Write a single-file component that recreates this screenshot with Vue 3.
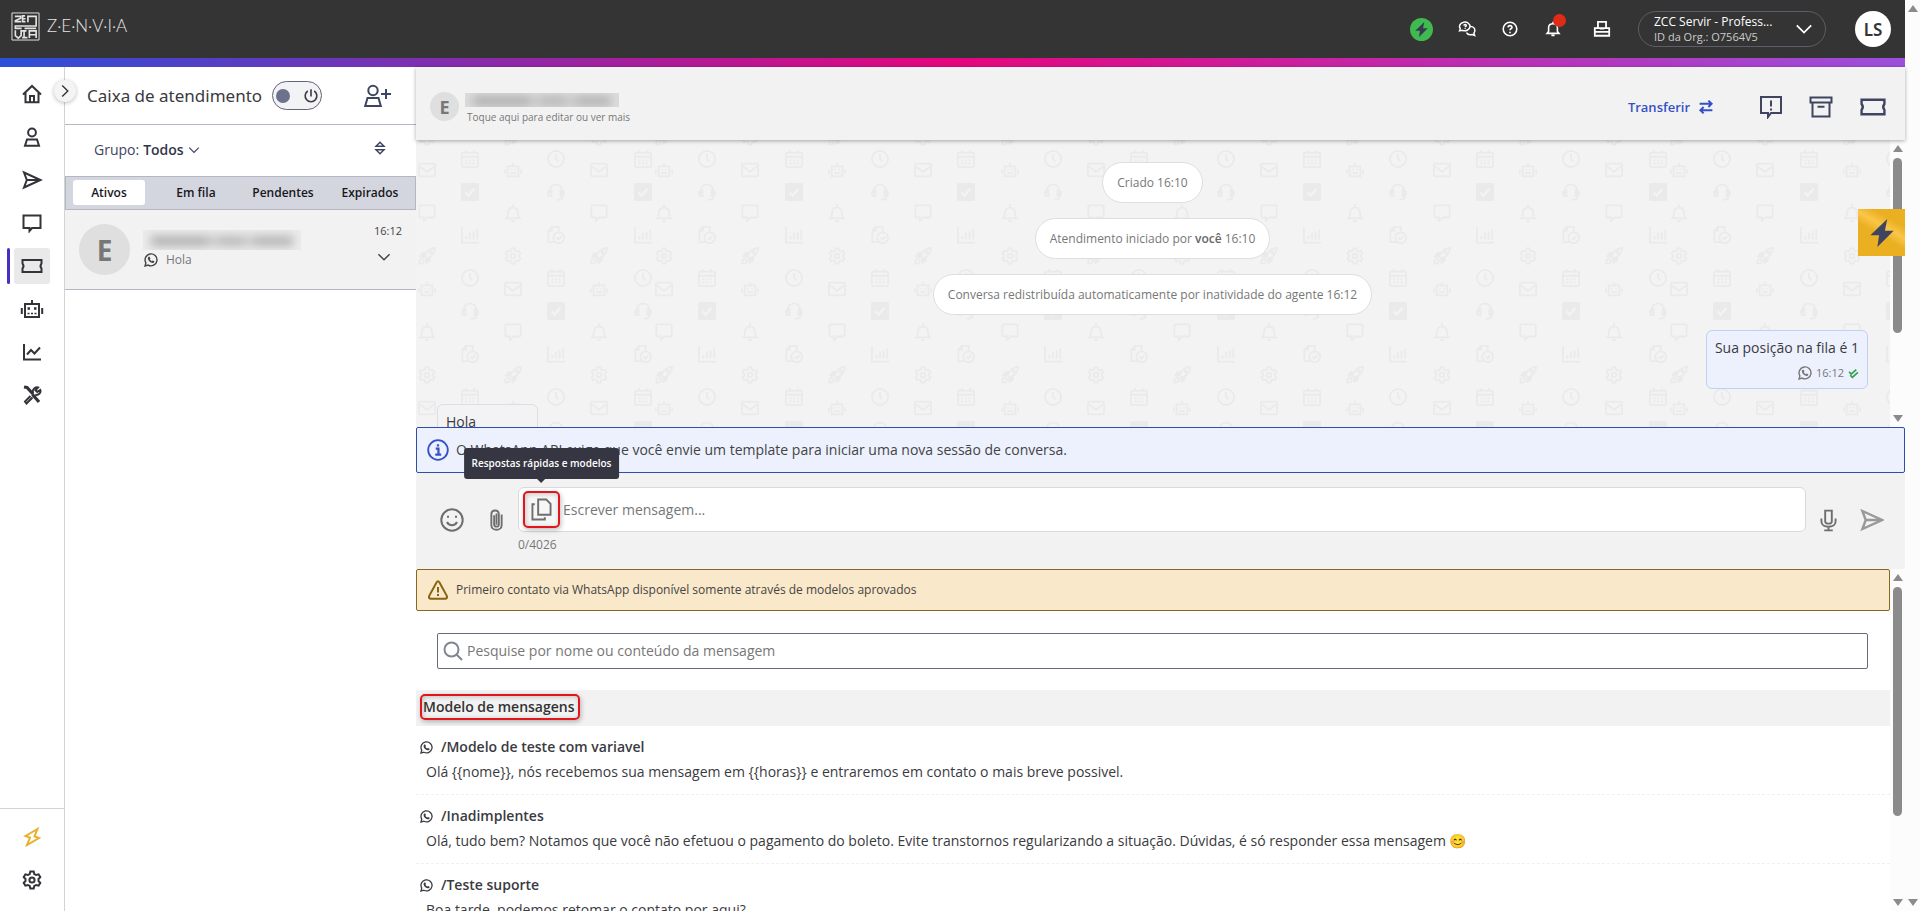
<script setup>
import { ref } from 'vue'

const navItems = [
  { id: 'home', label: 'Início' },
  { id: 'user', label: 'Contatos' },
  { id: 'send', label: 'Campanhas' },
  { id: 'chat', label: 'Conversas' },
  { id: 'ticket', label: 'Atendimento', active: true },
  { id: 'robot', label: 'Bots' },
  { id: 'chart', label: 'Relatórios' },
  { id: 'tools', label: 'Ferramentas' },
]

const tabs = ['Ativos', 'Em fila', 'Pendentes', 'Expirados']
const activeTab = ref('Ativos')
const message = ref('')
const query = ref('')

const templates = [
  {
    name: '/Modelo de teste com variavel',
    text: 'Olá {{nome}}, nós recebemos sua mensagem em {{horas}} e entraremos em contato o mais breve possivel.',
  },
  {
    name: '/Inadimplentes',
    text: 'Olá, tudo bem? Notamos que você não efetuou o pagamento do boleto. Evite transtornos regularizando a situação. Dúvidas, é só responder essa mensagem 😊',
  },
  {
    name: '/Teste suporte',
    text: 'Boa tarde, podemos retomar o contato por aqui?',
  },
]

// Wallpaper: one tile holds 24 columns, four column kinds repeat inside it.
const columnKinds = [
  [['w-rocket', -3], ['w-robot', 30], ['w-bell', 73], ['w-gear', 116], ['w-mail', 149], ['w-chat', 192], ['w-rocket', 235], ['w-robot', 268]],
  [['w-clock', 19], ['w-headset', 52], ['w-file', 95], ['w-calendar', 138], ['w-check', 171], ['w-bars', 214], ['w-clock', 257], ['w-headset', 290]],
  [['w-gear', -3], ['w-mail', 30], ['w-chat', 73], ['w-rocket', 116], ['w-robot', 149], ['w-bell', 192], ['w-gear', 235], ['w-mail', 268]],
  [['w-calendar', 19], ['w-check', 52], ['w-bars', 95], ['w-clock', 138], ['w-headset', 171], ['w-file', 214], ['w-calendar', 257], ['w-check', 290]],
]
const wallpaper = []
for (let tile = -1; tile < 3; tile++) {
  for (let i = 0; i < 24; i++) {
    const x = Math.round(248 + tile * 1015 + i * 43.2)
    if (x < -20) continue
    for (const [id, y] of columnKinds[i % 4]) wallpaper.push({ id, x: x - 9, y: y - 9 })
  }
}
</script>

<template>
  <svg class="sprite" aria-hidden="true">
    <symbol id="home" viewBox="0 0 20 20"><path d="M1 10.500 10 2l9 8.500M3.500 9v9.200h13V9M8 18v-6h4v6" /></symbol>
    <symbol id="user" viewBox="0 0 20 20"><circle cx="10" cy="5.500" r="3.900" /><path d="M5 12.500h10l2 6.200H3z" /></symbol>
    <symbol id="send" viewBox="0 0 20 20"><path d="M2 2.500 18.500 10 2 17.500 4.800 10zM4.800 10H18" /></symbol>
    <symbol id="chat" viewBox="0 0 20 20"><path d="M1.500 2.500h17v12.500H10l-2.500 3v-3h-6z" /></symbol>
    <symbol id="ticket" viewBox="0 0 22 20"><path d="M1.500 4h19v3.500q-2 2.500 0 5V16h-19v-3.500q2-2.500 0-5z" /></symbol>
    <symbol id="robot" viewBox="0 0 24 20"><path d="M5 5h14v13H5zM12 5V1M1.800 9v6M22.200 9v6" /><path d="M7.500 9.500h2.500M14 9.500h2.500" stroke-width="2.500" /><path d="M7.500 14.500h9" stroke-dasharray="2 1.500" stroke-width="1.400" /></symbol>
    <symbol id="chart" viewBox="0 0 20 20"><path d="M2 2v15.500h17M5 12.500l4-4.500 3.500 3.500 5.500-6" /></symbol>
    <symbol id="tools" viewBox="0 0 20 20"><path d="M2 2l3 .5L11 9M10.500 9.500l6.500 7.500" stroke-width="3.200" /><path d="M8.500 11 3 16.500l1.500 2L10.500 12.500M11 8c-1-3.500 2-6.500 5-5.500l-2.500 2.700 1.700 1.700L18.300 5c1 3-2 5.500-5 4.800" /></symbol>
    <symbol id="bolt" viewBox="0 0 20 20"><path d="M15.500 2 3.500 9l4.500 1.500L5 18l12-7-4.500-1.500z" /></symbol>
    <symbol id="bolt-solid" viewBox="0 0 20 24"><path d="M14.500 0 0 14h7.500L6 24 20 10h-7.500z" fill="currentColor" stroke="none" /></symbol>
    <symbol id="gear" viewBox="0 0 20 20"><path d="M8.300 1.500h3.400l.6 2.500 1.800 1 2.500-.7 1.700 2.900L16.500 9v2l1.800 1.800-1.700 2.900-2.500-.7-1.800 1-.6 2.500H8.300L7.700 16l-1.800-1-2.500.7-1.700-2.900L3.500 11V9L1.700 7.200l1.700-2.900 2.500.7 1.800-1z" /><circle cx="10" cy="10" r="2.600" /></symbol>
    <symbol id="chevron" viewBox="0 0 20 20"><path d="m2 6 8 8 8-8" /></symbol>
    <symbol id="power" viewBox="0 0 20 20"><path d="M10 1.500v9M6 3.800a7.300 7.300 0 1 0 8 0" /></symbol>
    <symbol id="user-add" viewBox="0 0 28 24"><circle cx="10" cy="6.500" r="4.700" /><path d="M4.500 14h11l2.300 8H2.200zM23 5v10M18 10h10" /></symbol>
    <symbol id="sort" viewBox="0 0 12 14"><path d="M2 5.200 6 1.200l4 4zM2 8.800l4 4 4-4z" stroke-width="1.500" /></symbol>
    <symbol id="whatsapp" viewBox="0 0 20 20"><path d="m1.500 18.500 1.200-4.400a8.500 8.500 0 1 1 3.300 3.200z" /><path d="M6.500 5.500 8 5.200l1.200 2.600-.9 1.200c.6 1.200 1.400 2 2.800 2.700l1.200-1.100 2.500 1.200c0 1.800-1.500 2.700-3 2.500-3.400-.6-6-3.400-6.300-6.300 0-1 .3-1.800 1-2.500z" fill="currentColor" stroke="none" /></symbol>
    <symbol id="talk" viewBox="0 0 24 22"><path d="M2 13.500 3 10.500a7 5.800 0 1 1 3 2.300zM16.500 7.500c4 .3 6 2.800 6 5.500 0 1.500-.5 2.500-1.300 3.500l1 3-3.200-1.200c-3.500 1-6.500-.3-7.700-2.500M7.800 6.500c.2-2 3.500-1.700 3.200 0-.1.900-1.500 1-1.500 2M9.500 10v1" /></symbol>
    <symbol id="help" viewBox="0 0 20 20"><circle cx="10" cy="10" r="8.500" /><path d="M7.500 8c.2-3.200 5.200-2.800 5 0-.1 1.700-2.500 1.700-2.500 3.700M10 13.500v1.800" /></symbol>
    <symbol id="bell" viewBox="0 0 20 20"><path d="M2.500 15.500h15L15.500 13V8.500c0-3-2-5-5.500-5s-5.500 2-5.500 5V13zM10 1v2.500M8 18h4" /></symbol>
    <symbol id="printer" viewBox="0 0 20 20"><path d="M5.500 9V2h9v7M2 17.500V9h16v8.500zM2 13.200h16M7.500 9.500h5" /></symbol>
    <symbol id="transfer" viewBox="0 0 20 20"><path d="M2 6h15M13 2l4 4-4 4M18 14H3M7 10l-4 4 4 4" stroke-width="2.500" /></symbol>
    <symbol id="alert-chat" viewBox="0 0 24 24"><path d="M2 2h20v16H12l-3 4v-4H2zM12 5.500v6M12 13.500v2" /></symbol>
    <symbol id="archive" viewBox="0 0 24 24"><path d="M1.500 2.500h21v5h-21zM3.500 7.500h17v14h-17zM8.500 11.800h7" /></symbol>
    <symbol id="checks" viewBox="0 0 20 20"><path d="m2 7 4 4 9-8M4 13l4 4L18 8" stroke-width="3" /></symbol>
    <symbol id="info" viewBox="0 0 24 24"><circle cx="12" cy="12" r="10.700" /><path d="M9.500 10.500h3V17M9 17h6.500M12 5.800v2.500" stroke-width="2.400" /></symbol>
    <symbol id="smile" viewBox="0 0 24 24"><circle cx="12" cy="12" r="10.700" /><path d="M7 14c2 4.300 8 4.300 10 0M8 7.800v2M16 7.800v2" /></symbol>
    <symbol id="clip" viewBox="0 0 16 24"><path d="M13.500 6v11.500c0 6.500-11 6.500-11 0V6c0-5.500 8-5.500 8 0v10.500c0 3.500-5 3.500-5 0V7M8 5v12" /></symbol>
    <symbol id="copy" viewBox="0 0 22 24"><path d="M7.500 1.500h8.500l4.500 4.500v11.500h-13zM4 6.500H1.500v16h13V20" /></symbol>
    <symbol id="mic" viewBox="0 0 18 24"><path d="M5.500 1.500h7V13c0 3-7 3-7 0zM1.500 10v3c0 7.500 15 7.500 15 0v-3M9 18.500v4M4.500 22.500h9" /></symbol>
    <symbol id="warning" viewBox="0 0 22 22"><path d="M9.500 3.500q1.500-2.300 3 0l7.300 13.300q1 2.700-1.800 2.900H4q-2.800-.2-1.800-2.900z" /><path d="M11 8v5.500M11 15v2" /></symbol>
    <symbol id="search" viewBox="0 0 20 20"><circle cx="8.500" cy="8.500" r="7" /><path d="m13.500 13.500 5.500 5.500" /></symbol>
    <symbol id="mark" viewBox="0 0 30 30"><path d="M1 1h28v28H1z" stroke-width="1" /><path d="M4 4.500h6v2L4.500 9v1h6M14.500 4h-2.500v6h3M12 7h3M17.500 10.500V4.500h8.500v10H4.500v2.500H11M4.500 19v5.500L7.500 27l3-2.500v-5h5.500M13.500 20v6M11.500 26.500h5.500M19 27v-7.500h7V27M19 23.500h7M14 17h12" stroke-width="1.700" /></symbol>
    <symbol id="w-rocket" viewBox="0 0 20 20"><path d="M7 10.500C9 5 13 1.500 19 1c-.5 6-4 10-9.500 12z" /><path d="M8 6.500H4.500L1.500 11l5 .5zM13.500 12v3.500L9 18.500l-.5-5z" fill="currentColor" stroke-width="1" /><circle cx="14" cy="6" r="1" /><path d="M1.500 18.500q-.5-5 2.500-5t2.500 2.500q-.5 3-5 2.500z" /></symbol>
    <symbol id="w-robot" viewBox="0 0 20 20"><path d="M4 6h12v11H4zM10 6V2M1 9.500V14M19 9.500V14M7 13.500h6M7 9.500h1.500M11.500 9.500H13" /></symbol>
    <symbol id="w-chat" viewBox="0 0 20 20"><path d="M2.500 1.500h15q1 0 1 1v11.500q0 1-1 1h-7L6.500 19v-4h-4q-1 0-1-1V2.500q0-1 1-1z" /></symbol>
    <symbol id="w-bell" viewBox="0 0 20 20"><path d="M2.500 16h15q-2-2-2-6c0-4-2-6-5.500-6s-5.500 2-5.500 6q0 4-2 6zM10 0v4M8 19h4" /></symbol>
    <symbol id="w-gear" viewBox="0 0 20 20"><path d="M8.300 1.500h3.400l.6 2.500 1.800 1 2.500-.7 1.700 2.900L16.500 9v2l1.800 1.800-1.700 2.900-2.500-.7-1.800 1-.6 2.500H8.300L7.700 16l-1.800-1-2.500.7-1.700-2.900L3.500 11V9L1.700 7.200l1.700-2.900 2.500.7 1.800-1z" /><circle cx="10" cy="10" r="2.600" /></symbol>
    <symbol id="w-mail" viewBox="0 0 20 20"><rect x="1" y="3" width="18" height="14" rx="1.500" /><path d="m2 6 8 6 8-6" /></symbol>
    <symbol id="w-clock" viewBox="0 0 20 20"><circle cx="10" cy="10" r="9" /><path d="M10 4.500V10l2.500 2.500" /></symbol>
    <symbol id="w-headset" viewBox="0 0 20 20"><path d="M3 12V9c0-9.500 14-9.500 14 0v7c0 2-2 2.500-6 2.500M3 8C.5 9 .5 13.500 3 14.500h2V8zM17 8c2.500 1 2.500 5.500 0 6.500h-2V8z" /></symbol>
    <symbol id="w-file" viewBox="0 0 20 20"><path d="M9 18H1.500V5l4-4H13v5M5.500 1v4h-4" /><circle cx="13" cy="13" r="6" /><path d="m10.500 13 2 2 3.500-3.500" /></symbol>
    <symbol id="w-calendar" viewBox="0 0 20 20"><rect x="1" y="3" width="18" height="16" rx="1.500" /><path d="M1 7.500h18M5.500 0v4M14.500 0v4" /><path d="M5 11.500h11M5 15h11" stroke-dasharray="2 2" /></symbol>
    <symbol id="w-check" viewBox="0 0 20 20"><rect x="0" y="0" width="20" height="20" rx="2" fill="currentColor" stroke="none" /><path d="m5 10.500 3.500 3.500L15 6.500" stroke="#f3f3f3" stroke-width="2.500" /></symbol>
    <symbol id="w-bars" viewBox="0 0 20 20"><path d="M1 1v17.500h19M6 15v-4M10 15V7.500M14 15V6M18 15V4" /></symbol>
  </svg>

  <div class="window">
    <div class="app">
      <header class="topbar">
        <a class="brand" href="#" aria-label="Zenvia">
          <svg class="brand-mark"><use href="#mark" /></svg>
          <span>Z·E·N·V·I·A</span>
        </a>
        <div class="top-actions">
          <button class="boost" aria-label="Destaques"><svg><use href="#bolt-solid" /></svg></button>
          <button aria-label="Comunidade"><svg class="i18"><use href="#talk" /></svg></button>
          <button aria-label="Ajuda"><svg class="i16"><use href="#help" /></svg></button>
          <button class="bell" aria-label="Notificações"><svg class="i16"><use href="#bell" /></svg><i></i></button>
          <button class="news" aria-label="Novidades"><svg class="i18"><use href="#printer" /></svg></button>
        </div>
        <button class="org">
          <span class="org-text"><span>ZCC Servir - Profess...</span><small>ID da Org.: O7564V5</small></span>
          <svg class="i18"><use href="#chevron" /></svg>
        </button>
        <button class="me">LS</button>
      </header>
      <div class="rainbow"></div>

      <div class="body">
        <nav class="rail">
          <a v-for="item in navItems" :key="item.id" href="#" :aria-label="item.label" :class="{ active: item.active }">
            <svg><use :href="'#' + item.id" /></svg>
          </a>
          <div class="rail-bottom">
            <a href="#" class="gold" aria-label="Planos"><svg><use href="#bolt" /></svg></a>
            <a href="#" aria-label="Configurações"><svg><use href="#gear" /></svg></a>
          </div>
          <button class="expand" aria-label="Expandir menu"><svg><use href="#chevron" /></svg></button>
        </nav>

        <aside class="inbox">
          <div class="inbox-head">
            <h1>Caixa de atendimento</h1>
            <button class="toggle" aria-label="Disponibilidade"><i></i><svg class="i16"><use href="#power" /></svg></button>
            <button class="add" aria-label="Novo atendimento"><svg><use href="#user-add" /></svg></button>
          </div>
          <div class="group-row">
            <button class="group">Grupo: <b>Todos</b><svg><use href="#chevron" /></svg></button>
            <button class="sort" aria-label="Ordenar"><svg><use href="#sort" /></svg></button>
          </div>
          <div class="tabs">
            <button v-for="tab in tabs" :key="tab" :class="{ on: tab === activeTab }" @click="activeTab = tab">{{ tab }}</button>
          </div>
          <article class="card">
            <span class="avatar">E</span>
            <div class="card-main">
              <div class="hidden-name"><i></i></div>
              <p><svg><use href="#whatsapp" /></svg>Hola</p>
            </div>
            <div class="card-side">
              <time>16:12</time>
              <svg><use href="#chevron" /></svg>
            </div>
          </article>
        </aside>

        <main class="chat">
          <header class="chat-head">
            <span class="avatar small">E</span>
            <div class="contact">
              <div class="hidden-name"><i></i></div>
              <a href="#">Toque aqui para editar ou ver mais</a>
            </div>
            <button class="transfer">Transferir <svg><use href="#transfer" /></svg></button>
            <button aria-label="Observação"><svg class="i24"><use href="#alert-chat" /></svg></button>
            <button aria-label="Arquivar"><svg class="i24"><use href="#archive" /></svg></button>
            <button aria-label="Ticket"><svg class="i28"><use href="#ticket" /></svg></button>
          </header>

          <div class="scroll-row messages-row">
            <section class="messages">
              <svg class="wallpaper" aria-hidden="true">
                <use v-for="(w, n) in wallpaper" :key="n" :href="'#' + w.id" :x="w.x" :y="w.y" width="18" height="18" />
              </svg>
              <p class="event">Criado 16:10</p>
              <p class="event">Atendimento iniciado por <b>você</b> 16:10</p>
              <p class="event">Conversa redistribuída automaticamente por inatividade do agente 16:12</p>
              <div class="bubble out">
                <p>Sua posição na fila é 1</p>
                <small><svg class="i14"><use href="#whatsapp" /></svg><span>16:12</span><svg class="checks"><use href="#checks" /></svg></small>
              </div>
              <div class="bubble in"><p>Hola</p></div>
            </section>
            <div class="bar"><i class="up"></i><i class="thumb"></i><i class="down"></i></div>
          </div>

          <div class="notice info">
            <svg><use href="#info" /></svg>
            <span>O WhatsApp API exige que você envie um template para iniciar uma nova sessão de conversa.</span>
          </div>

          <form class="composer" @submit.prevent>
            <button type="button" aria-label="Emoji"><svg class="i24"><use href="#smile" /></svg></button>
            <button type="button" aria-label="Anexar"><svg class="clip"><use href="#clip" /></svg></button>
            <div class="field">
              <div class="input-box">
                <button type="button" class="quick" aria-label="Respostas rápidas e modelos">
                  <svg><use href="#copy" /></svg>
                  <span class="tooltip" role="tooltip">Respostas rápidas e modelos</span>
                </button>
                <input v-model="message" aria-label="Mensagem" placeholder="Escrever mensagem..." />
              </div>
              <small>{{ message.length }}/4026</small>
            </div>
            <button type="button" aria-label="Gravar áudio"><svg class="mic"><use href="#mic" /></svg></button>
            <button type="submit" class="submit" aria-label="Enviar"><svg class="i24"><use href="#send" /></svg></button>
          </form>

          <div class="scroll-row templates-row">
            <section class="templates">
              <div class="notice warn">
                <svg><use href="#warning" /></svg>
                <span>Primeiro contato via WhatsApp disponível somente através de modelos aprovados</span>
              </div>
              <div class="search">
                <svg><use href="#search" /></svg>
                <input v-model="query" aria-label="Pesquisar" placeholder="Pesquise por nome ou conteúdo da mensagem" />
              </div>
              <h2><span>Modelo de mensagens</span></h2>
              <ul>
                <li v-for="item in templates" :key="item.name">
                  <h3><svg><use href="#whatsapp" /></svg>{{ item.name }}</h3>
                  <p>{{ item.text }}</p>
                </li>
              </ul>
            </section>
            <div class="bar"><i class="up"></i><i class="thumb"></i><i class="down"></i></div>
          </div>

          <button class="flag" aria-label="Dicas"><svg><use href="#bolt-solid" /></svg></button>
        </main>
      </div>
    </div>
    <div class="bar page-bar"><i class="up"></i><i class="down"></i></div>
  </div>
</template>

<style>
body {
  margin: 0;
  overflow: hidden;
}
</style>

<style scoped>
* {
  box-sizing: border-box;
}
.sprite {
  position: absolute;
  width: 0;
  height: 0;
}
svg {
  display: block;
  flex: none;
  fill: none;
  stroke: currentColor;
  stroke-width: 2;
}
h1, h2, h3, p, ul {
  margin: 0;
  padding: 0;
  font-weight: 400;
}
b {
  font-weight: 600;
}
button {
  display: flex;
  align-items: center;
  justify-content: center;
  padding: 0;
  border: 0;
  background: none;
  color: inherit;
  font: inherit;
  cursor: pointer;
}
a {
  color: inherit;
  text-decoration: none;
}
input {
  flex: 1;
  min-width: 0;
  padding: 0;
  border: 0;
  outline: 0;
  background: none;
  font: inherit;
}
.i14 { width: 14px; height: 14px; }
.i16 { width: 16px; height: 16px; }
.i18 { width: 18px; height: 18px; }
.i24 { width: 24px; height: 24px; }
.i28 { width: 28px; height: 24px; }

.window {
  display: flex;
  height: 100vh;
  background: #fff;
  color: #3a3a40;
  font: 14px/20px "Open Sans", "Noto Sans", sans-serif;
}
.app {
  display: flex;
  flex: 1;
  flex-direction: column;
  min-width: 0;
}

/* top bar */
.topbar {
  display: flex;
  align-items: center;
  flex: none;
  height: 58px;
  padding: 0 14px 0 11px;
  background: #343434;
  color: #fff;
}
.brand {
  display: flex;
  align-items: center;
  gap: 7px;
  margin: 0 auto 6px 0;
  color: #e4e4e4;
  font: 300 17px/20px Lato, sans-serif;
}
.brand-mark {
  width: 29px;
  height: 29px;
}
.top-actions {
  display: flex;
  align-items: center;
  margin-right: 15px;
}
.top-actions button {
  position: relative;
  width: 43px;
  height: 24px;
}
.top-actions .boost {
  width: 23px;
  height: 23px;
  margin-right: 12px;
  border-radius: 50%;
  background: #3fb950;
  color: #343a50;
}
.top-actions .news {
  margin-left: 6px;
}
.boost svg {
  width: 13px;
  height: 15px;
}
.bell i {
  position: absolute;
  top: -3px;
  left: 22px;
  width: 13px;
  height: 13px;
  border-radius: 50%;
  background: #e02b17;
}
.org {
  justify-content: space-between;
  width: 188px;
  height: 36px;
  padding: 0 12px 0 15px;
  border: 1px solid #5d5e69;
  border-radius: 18px;
  text-align: left;
}
.org-text {
  font-size: 12px;
  line-height: 16px;
}
.org-text span, .org-text small {
  display: block;
}
.org small {
  color: #ccc;
  font-size: 11px;
  line-height: 14px;
}
.me {
  width: 36px;
  height: 36px;
  margin-left: 29px;
  border-radius: 50%;
  background: #fff;
  color: #343434;
  font: 600 17px "Noto Sans", sans-serif;
}
.rainbow {
  flex: none;
  height: 9px;
  background: linear-gradient(90deg, #2b50d8, #e5067e 50%, #9b4fdc);
}
.body {
  display: flex;
  flex: 1;
  min-height: 0;
}

/* navigation rail */
.rail {
  position: relative;
  display: flex;
  flex: none;
  flex-direction: column;
  align-items: center;
  gap: 7px;
  width: 65px;
  padding-top: 9px;
  border-right: 1px solid #d3d3d6;
  color: #333439;
}
.rail a {
  position: relative;
  display: flex;
  align-items: center;
  justify-content: center;
  width: 36px;
  height: 36px;
  border-radius: 3px;
}
.rail svg {
  width: 24px;
  height: 20px;
}
.rail a.active {
  background: #e9e9e9;
}
.rail a.active::before {
  position: absolute;
  top: 0;
  left: -7px;
  width: 3px;
  height: 36px;
  border-radius: 2px;
  background: #472fc4;
  content: "";
}
.rail-bottom {
  display: flex;
  flex-direction: column;
  align-items: center;
  gap: 7px;
  width: 100%;
  margin-top: auto;
  padding: 10px 0 13px;
  border-top: 1px solid #d3d3d6;
}
.rail .gold {
  color: #e8b02a;
}
.expand {
  position: absolute;
  top: 13px;
  right: -12px;
  z-index: 3;
  width: 22px;
  height: 22px;
  border-radius: 50%;
  background: #f4f4f4;
  box-shadow: 0 1px 4px #0004;
}
.rail .expand svg {
  width: 14px;
  height: 14px;
  transform: rotate(-90deg);
}

/* inbox */
.inbox {
  flex: none;
  width: 351px;
}
.inbox-head {
  display: flex;
  align-items: center;
  height: 58px;
  padding: 0 25px 0 22px;
  border-bottom: 1px solid #b4b6c2;
}
.inbox h1 {
  color: #3a3a3e;
  font: 17px/24px "Noto Sans", sans-serif;
  white-space: nowrap;
}
.toggle {
  gap: 13px;
  width: 50px;
  height: 29px;
  margin-left: 10px;
  border: 1px solid #5f6377;
  border-radius: 15px;
  background: #f3f3f5;
}
.toggle i {
  width: 14px;
  height: 14px;
  border-radius: 50%;
  background: #6c728c;
}
.add {
  margin-left: auto;
  color: #3f4560;
}
.add svg {
  width: 28px;
  height: 24px;
}
.group-row {
  display: flex;
  align-items: center;
  justify-content: space-between;
  height: 51px;
  padding: 0 30px 2px 29px;
  color: #3f4560;
}
.group {
  gap: 4px;
}
.group b {
  color: #33364a;
}
.group svg {
  width: 12px;
  height: 12px;
}
.sort {
  margin-bottom: 4px;
}
.sort svg {
  width: 12px;
  height: 14px;
}
.tabs {
  display: flex;
  gap: 15px;
  height: 34px;
  padding: 3px 0 4px 7px;
  border: 1px solid #b4b6c2;
  background: #d4d6df;
  color: #17171a;
  font-size: 12px;
  font-weight: 600;
}
.tabs button {
  flex: none;
  width: 72px;
  border-radius: 3px;
}
.tabs .on {
  background: #fff;
}
.card {
  display: flex;
  gap: 13px;
  height: 80px;
  padding: 14px 14px 0;
  border-bottom: 1px solid #b4b6c2;
  background: #f2f2f2;
}
.avatar {
  display: flex;
  align-items: center;
  justify-content: center;
  flex: none;
  width: 51px;
  height: 51px;
  border-radius: 50%;
  background: #dfdfdf;
  color: #777;
  font: 700 28px "Open Sans", sans-serif;
}
.card-main {
  flex: 1;
  padding-top: 6px;
}
.hidden-name {
  width: 158px;
  height: 20px;
  overflow: hidden;
  background: #ebebeb;
}
.hidden-name i {
  display: block;
  height: 10px;
  margin: 6px 8px;
  background: linear-gradient(90deg, #b0b0b0 0 54px, #d0d0d0 62px, #b8b8b8 70px 90px, #d0d0d0 98px, #b4b4b4 106px);
  filter: blur(5px);
}
.card-main p {
  display: flex;
  align-items: center;
  gap: 8px;
  padding-left: 1px;
  color: #777;
  font-size: 12px;
}
.card-main svg {
  width: 14px;
  height: 14px;
  color: #444;
}
.card-side {
  display: flex;
  flex-direction: column;
  align-items: center;
  gap: 12px;
  color: #444;
  font-size: 11px;
  line-height: 14px;
}
.card-side svg {
  width: 14px;
  height: 14px;
  margin-right: 8px;
}

/* conversation */
.chat {
  position: relative;
  display: flex;
  flex: 1;
  flex-direction: column;
  min-width: 0;
}
.chat-head {
  position: relative;
  z-index: 2;
  display: flex;
  align-items: center;
  gap: 26px;
  flex: none;
  height: 73px;
  padding: 6px 18px 0 14px;
  background: #f2f2f2;
  box-shadow: 0 1px 4px #0005;
  color: #3f4560;
}
.avatar.small {
  width: 29px;
  height: 29px;
  font-size: 18px;
}
.contact {
  margin: 0 auto 0 -20px;
  padding-top: 6px;
  color: #777;
  font-size: 10px;
  line-height: 20px;
}
.contact .hidden-name {
  width: 154px;
  height: 14px;
  background: #dcdcdc;
}
.contact .hidden-name i {
  margin-top: 3px;
}
.contact a {
  display: block;
  padding-left: 2px;
}
.transfer {
  gap: 8px;
  margin-right: 19px;
  color: #3550c8;
  font-size: 13px;
  font-weight: 600;
}
.transfer svg {
  width: 16px;
  height: 16px;
}
.scroll-row {
  display: flex;
  min-height: 0;
}
.messages-row {
  flex: 287 1 0;
}
.templates-row {
  flex: 342 1 0;
}
.messages {
  position: relative;
  display: flex;
  flex: 1;
  flex-direction: column;
  align-items: center;
  gap: 15px;
  overflow: hidden;
  padding: 22px 22px 0 21px;
  background: #f3f3f3;
}
.wallpaper {
  position: absolute;
  inset: 0;
  width: 100%;
  height: 100%;
  color: #eaeaea;
}
.event, .bubble {
  position: relative;
  flex: none;
  border: 1px solid #dededf;
  background: #fff;
}
.event {
  padding: 0 14px;
  border-radius: 21px;
  color: #777;
  font-size: 12px;
  line-height: 39px;
}
.event b {
  color: #666;
}
.bubble {
  padding: 7px 8px;
  border-radius: 6px;
}
.bubble.out {
  align-self: flex-end;
  height: 59px;
  border-color: #c3cff2;
  background: #edf1fe;
}
.bubble small {
  display: flex;
  align-items: center;
  justify-content: flex-end;
  gap: 4px;
  padding-top: 5px;
  color: #777;
  font-size: 11px;
}
.bubble .checks {
  width: 11px;
  height: 11px;
  color: #2fa24a;
}
.bubble.in {
  align-self: flex-start;
  width: 101px;
  background: #f3f3f5;
}
.notice {
  display: flex;
  align-items: center;
  gap: 7px;
  flex: none;
  padding: 0 11px 0 10px;
  border: 1px solid;
  border-radius: 2px;
}
.notice svg {
  width: 22px;
  height: 22px;
}
.notice span {
  color: #444;
}
.info {
  height: 46px;
  border-color: #2f4ea8;
  background: #edf1fe;
}
.info svg {
  color: #3550c8;
}
.warn {
  height: 42px;
  border-color: #85681f;
  background: #fae8cb;
  font-size: 12px;
}
.warn svg {
  color: #866511;
}
.composer {
  display: flex;
  align-items: flex-start;
  flex: none;
  height: 96px;
  padding: 14px 12px 0 13px;
  background: #f2f2f2;
  color: #6e6e6e;
}
.composer > button {
  flex: none;
  width: 43px;
  height: 24px;
  margin-top: 21px;
}
.composer > button:first-child {
  width: 46px;
}
.composer .submit {
  color: #999;
}
.clip {
  width: 15px;
  height: 24px;
}
.mic {
  width: 17px;
  height: 23px;
}
.field {
  flex: 1;
  margin-right: 1px;
}
.field small {
  display: block;
  padding-top: 3px;
  color: #777;
  font-size: 12px;
}
.input-box {
  display: flex;
  align-items: center;
  gap: 3px;
  height: 45px;
  padding-left: 4px;
  border: 1px solid #dadadc;
  border-radius: 6px;
  background: #fff;
}
.quick {
  position: relative;
  width: 37px;
  height: 37px;
  border: 2px solid #e0161c;
  border-radius: 5px;
  background: #f6f6f6;
  box-shadow: 1px 2px 5px #0004, inset 1px 1px 5px #0003;
}
.quick svg {
  width: 21px;
  height: 23px;
}
.tooltip {
  position: absolute;
  bottom: 47px;
  left: 50%;
  z-index: 4;
  padding: 0 8px;
  border-radius: 3px;
  background: #363642;
  color: #fff;
  font-size: 10px;
  font-weight: 600;
  line-height: 31px;
  white-space: nowrap;
  transform: translateX(-50%);
}
.tooltip::after {
  position: absolute;
  top: 100%;
  left: 50%;
  margin-left: -4px;
  border: 4px solid transparent;
  border-top-color: #363642;
  content: "";
}
::placeholder {
  color: #777;
  opacity: 1;
}

/* templates */
.templates {
  flex: 1;
  min-width: 0;
  overflow: hidden;
}
.search {
  display: flex;
  align-items: center;
  gap: 4px;
  height: 36px;
  margin: 22px 22px 21px 21px;
  padding: 0 5px;
  border: 1px solid #666a7b;
  border-radius: 2px;
}
.search svg {
  width: 20px;
  height: 20px;
  color: #808791;
}
.templates h2 {
  height: 36px;
  padding: 4px;
  background: #f2f2f2;
  color: #333;
  font-size: 14px;
  font-weight: 600;
}
.templates h2 span {
  display: inline-block;
  min-width: 160px;
  padding: 0 2px 0 1px;
  border: 2px solid #e0161c;
  border-radius: 5px;
  box-shadow: 1px 2px 5px #0004, inset 1px 1px 5px #0003;
  line-height: 22px;
  white-space: nowrap;
}
.templates ul {
  list-style: none;
}
.templates li {
  padding: 11px 4px 12px;
  border-bottom: 1px dashed #f0f0f0;
}
.templates h3 {
  display: flex;
  align-items: center;
  gap: 8px;
  font-size: 14px;
  font-weight: 600;
}
.templates h3 svg {
  width: 13px;
  height: 13px;
}
.templates li p {
  padding: 5px 6px 0;
  white-space: nowrap;
}

/* scroll bars */
.bar {
  display: flex;
  flex: none;
  flex-direction: column;
  align-items: center;
  width: 15px;
  padding: 5px 0;
  background: #fcfcfc;
}
.bar i {
  flex: none;
}
.up, .down {
  border: 5px solid transparent;
}
.up {
  border-top: 0;
  border-bottom: 7px solid #8b8b8b;
}
.down {
  margin-top: auto;
  border-top: 7px solid #8b8b8b;
  border-bottom: 0;
}
.thumb {
  width: 9px;
  height: 63%;
  margin-top: 6px;
  border-radius: 5px;
  background: #8b8b8b;
}
.templates-row .thumb {
  height: 69%;
}
.flag {
  position: absolute;
  top: 142px;
  right: 0;
  width: 47px;
  height: 47px;
  background: linear-gradient(30deg, #eab022 45%, #fbc648 60%, #eab022 75%);
  color: #3f4560;
}
.flag svg {
  width: 24px;
  height: 28px;
}
</style>
